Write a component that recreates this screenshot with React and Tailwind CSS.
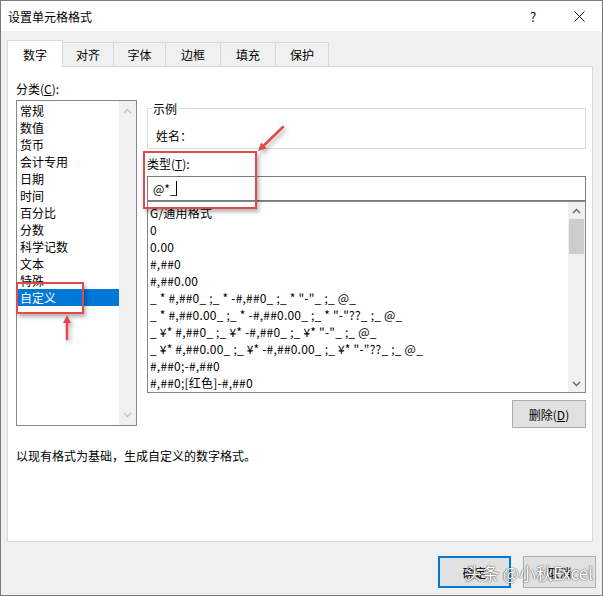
import React from "react";

const font = "font-['Noto_Sans_CJK_SC','Noto_Sans',sans-serif]";

const TABS = [
  { label: "数字", w: "w-[56px]", active: true },
  { label: "对齐", w: "w-[51px]" },
  { label: "字体", w: "w-[52px]" },
  { label: "边框", w: "w-[55px]" },
  { label: "填充", w: "w-[55px]" },
  { label: "保护", w: "w-[53px]" },
];

const CATEGORIES = ["常规", "数值", "货币", "会计专用", "日期", "时间", "百分比", "分数", "科学记数", "文本", "特殊", "自定义"];

const FORMATS = [
  "G/通用格式",
  "0",
  "0.00",
  "#,##0",
  "#,##0.00",
  '_ * #,##0_ ;_ * -#,##0_ ;_ * "-"_ ;_ @_',
  '_ * #,##0.00_ ;_ * -#,##0.00_ ;_ * "-"??_ ;_ @_',
  '_ ¥* #,##0_ ;_ ¥* -#,##0_ ;_ ¥* "-"_ ;_ @_',
  '_ ¥* #,##0.00_ ;_ ¥* -#,##0.00_ ;_ ¥* "-"??_ ;_ @_',
  "#,##0;-#,##0",
  "#,##0;[红色]-#,##0",
];

const Chevron = ({ up, color }) => (
  <svg width="9" height="6" viewBox="0 0 9 6">
    <polyline
      points={up ? "1,5 4.5,1.5 8,5" : "1,1 4.5,4.5 8,1"}
      fill="none"
      stroke={color}
      strokeWidth="1.3"
    />
  </svg>
);

const Arrow = ({ x1, y1, x2, y2 }) => {
  const a = Math.atan2(y2 - y1, x2 - x1);
  const len = 9;
  const spread = 0.45;
  const p1 = [x2 - len * Math.cos(a - spread), y2 - len * Math.sin(a - spread)];
  const p2 = [x2 - len * Math.cos(a + spread), y2 - len * Math.sin(a + spread)];
  return (
    <g>
      <line x1={x1} y1={y1} x2={x2 - 4 * Math.cos(a)} y2={y2 - 4 * Math.sin(a)} stroke="#e5484b" strokeWidth="2.5" strokeLinecap="round" />
      <polygon points={`${x2},${y2} ${p1[0]},${p1[1]} ${p2[0]},${p2[1]}`} fill="#e5484b" />
    </g>
  );
};

export default function App() {
  return (
    <div className={`relative w-[603px] h-[596px] bg-[#f0f0f0] border border-[#7a7a7a] text-[12px] leading-[17px] text-black ${font}`}>
      {/* title bar */}
      <div className="flex items-center h-[30px] bg-white">
        <span className="pl-[7px] text-[12px]">设置单元格格式</span>
        <div className="ml-auto flex h-full">
          <div className="w-[46px] flex items-center justify-center text-[13px]">?</div>
          <div className="w-[46px] flex items-center justify-center">
            <svg width="11" height="11" viewBox="0 0 11 11">
              <path d="M0.5 0.5 L10.5 10.5 M10.5 0.5 L0.5 10.5" stroke="#111" strokeWidth="1" />
            </svg>
          </div>
        </div>
      </div>

      {/* tabs */}
      <div className="flex items-end pl-[6px] pt-[9px] -mb-px relative z-10">
        {TABS.map((t) =>
          t.active ? (
            <div key={t.label} className={`${t.w} h-[27px] bg-white border border-b-0 border-[#d9d9d9] flex items-center justify-center`}>
              {t.label}
            </div>
          ) : (
            <div key={t.label} className={`${t.w} h-[25px] bg-[#f0f0f0] border-t border-r border-b border-[#d9d9d9] flex items-center justify-center`}>
              {t.label}
            </div>
          )
        )}
      </div>

      {/* panel */}
      <div className="ml-[6px] w-[586px] h-[476px] bg-white border border-[#d9d9d9] flex flex-col">
        <div className="flex pl-[8px] gap-[10px]">
          {/* category column */}
          <div className="w-[121px] pt-[13px] flex flex-col">
            <div className="h-[17px]">
              分类(<span className="underline">C</span>):
            </div>
            <div className="mt-[3px] h-[326px] border border-[#828790] flex">
              <div className="flex-1 pt-[1px] pl-[1px]">
                {CATEGORIES.map((c) => (
                  <div
                    key={c}
                    className={`h-[17px] px-[2px] ${c === "自定义" ? "bg-[#0078d7] text-white" : ""}`}
                  >
                    {c}
                  </div>
                ))}
              </div>
              <div className="w-[17px] bg-[#f0f0f0] flex flex-col justify-between items-center py-[7px]">
                <Chevron up color="#c2c2c2" />
                <Chevron color="#c2c2c2" />
              </div>
            </div>
          </div>

          {/* type column */}
          <div className="w-[439px] pt-[33px] flex flex-col">
            <fieldset className="border border-[#dcdcdc] pl-[8px] pt-[10px] pb-[4px]">
              <legend className="-ml-[4px] px-[1px] leading-[17px]">示例</legend>
              <div className="h-[17px]">姓名：</div>
            </fieldset>
            <div className="mt-[6px] h-[17px]">
              类型(<span className="underline">T</span>):
            </div>
            <div className="mt-[4px] h-[25px] border border-[#7a7a7a] flex items-center pl-[5px]">
              <span>@*_</span>
              <span className="w-px h-[15px] bg-black -ml-[1px]" />
            </div>
            <div className="h-[192px] border border-[#828790] flex">
              <div className="flex-1 pt-[2px] pl-[2px] whitespace-pre tracking-[0.2px]">
                {FORMATS.map((f) => (
                  <div key={f} className="h-[17px]">
                    {f}
                  </div>
                ))}
              </div>
              <div className="w-[17px] bg-[#f0f0f0] flex flex-col">
                <div className="h-[17px] flex items-center justify-center">
                  <Chevron up color="#606060" />
                </div>
                <div className="h-[35px] mx-[1px] bg-[#cdcdcd]" />
                <div className="flex-1" />
                <div className="h-[17px] flex items-center justify-center">
                  <Chevron color="#606060" />
                </div>
              </div>
            </div>
            <button className="mt-[7px] self-end w-[74px] h-[28px] bg-[#e1e1e1] border border-[#adadad]">
              删除(<span className="underline">D</span>)
            </button>
          </div>
        </div>
        <div className="mt-[19px] pl-[8px] h-[17px]">以现有格式为基础，生成自定义的数字格式。</div>
      </div>

      {/* bottom buttons */}
      <div className="flex justify-end gap-[12px] pr-[6px] mt-[14px]">
        <button className="w-[73px] h-[32px] bg-[#e1e1e1] border-2 border-[#0078d7]">确定</button>
        <button className="w-[73px] h-[32px] bg-[#e1e1e1] border border-[#adadad]">取消</button>
      </div>

      {/* annotations */}
      <div className="absolute left-[142px] top-[150px] w-[114px] h-[58px] border-2 border-[#e5484b] shadow-[2px_3px_4px_rgba(0,0,0,0.3)] pointer-events-none" />
      <div className="absolute left-[15px] top-[281px] w-[68px] h-[32px] border-2 border-[#e5484b] shadow-[2px_3px_4px_rgba(0,0,0,0.3)] pointer-events-none" />
      <svg className="absolute left-0 top-0 pointer-events-none" width="603" height="596" style={{ filter: "drop-shadow(2px 3px 2px rgba(0,0,0,0.3))" }}>
        <Arrow x1={282} y1={126} x2={257} y2={150} />
        <Arrow x1={66} y1={338} x2={66} y2={314} />
      </svg>

      {/* watermark */}
      <div className="absolute left-[464px] top-[561px] text-[17px] leading-[22px] text-white font-['Noto_Sans_CJK_SC',sans-serif] [text-shadow:0_0_1px_rgba(0,0,0,0.7),0_0_2px_rgba(0,0,0,0.5)] pointer-events-none">
        头条 @小秋Excel
      </div>
    </div>
  );
}
